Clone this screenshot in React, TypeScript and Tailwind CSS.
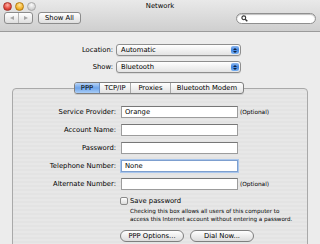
import React from 'react';

const Popup: React.FC<{ value: string }> = ({ value }) => (
  <div className="flex h-[12px] w-[125px] items-stretch rounded-[3px] border border-[#8e8e8e] bg-gradient-to-b from-white to-[#e4e4e4] shadow-[0_1px_0_rgba(0,0,0,0.08)]">
    <span className="flex-1 pl-[4px] leading-[10px]">{value}</span>
    <span className="mr-[1px] my-[1px] flex w-[8px] flex-col items-center justify-center gap-[1px] rounded-[2px] bg-gradient-to-b from-[#8fb9f0] via-[#3f84e0] to-[#79b1f2]">
      <span className="h-0 w-0 border-x-[2px] border-b-[2px] border-x-transparent border-b-[#10213d]" />
      <span className="h-0 w-0 border-x-[2px] border-t-[2px] border-x-transparent border-t-[#10213d]" />
    </span>
  </div>
);

const Field: React.FC<{ label: string; value?: string; optional?: boolean; focus?: boolean }> = ({ label, value, optional, focus }) => (
  <div className="flex h-[12px] items-center">
    <span className="w-[103px] text-right">{label}</span>
    <div
      className={
        focus
          ? 'ml-[5px] h-[12px] w-[117px] border border-[#7d9fcf] bg-white pl-[3px] leading-[10px] shadow-[0_0_0_1px_#a9c6ec]'
          : 'ml-[5px] h-[12px] w-[117px] border border-[#9c9c9c] border-t-[#777] bg-white pl-[3px] leading-[10px]'
      }
    >
      {value}
    </div>
    {optional && <span className="ml-[2px] text-[5.8px]">(Optional)</span>}
  </div>
);

const App: React.FC = () => {
  return (
    <div className="h-[244px] w-[320px] overflow-hidden bg-[#ececec] font-['DejaVu_Sans',sans-serif] text-[6.8px] text-black">
      {/* Unified toolbar */}
      <div className="flex h-[32px] flex-col border-b border-[#9a9a9a] bg-gradient-to-b from-[#e9e9e9] to-[#cfcfcf]">
        <div className="relative flex h-[11px] items-center pl-[3px] pt-[1px]">
          <div className="flex gap-[3px]">
            <span className="h-[9px] w-[9px] rounded-full border border-[#a8342c] bg-[radial-gradient(circle_at_50%_30%,#ffb4a8,#e2463b_60%,#b8281e)]" />
            <span className="h-[9px] w-[9px] rounded-full border border-[#b57b12] bg-[radial-gradient(circle_at_50%_30%,#ffe6a0,#f3b42e_60%,#c98410)]" />
            <span className="h-[9px] w-[9px] rounded-full border border-[#a9a9a9] bg-[radial-gradient(circle_at_50%_30%,#fafafa,#d6d6d6_60%,#bdbdbd)]" />
          </div>
          <span className="absolute inset-x-0 top-[1px] text-center">Network</span>
        </div>
        <div className="mt-[1px] flex items-center pl-[4px] pr-[4px]">
          <div className="flex h-[12px] w-[29px] rounded-[3px] border border-[#8c8c8c] bg-gradient-to-b from-white to-[#dedede]">
            <span className="flex flex-1 items-center justify-center border-r border-[#b4b4b4]">
              <span className="h-0 w-0 border-y-[2.5px] border-r-[4px] border-y-transparent border-r-[#a6a6a6]" />
            </span>
            <span className="flex flex-1 items-center justify-center">
              <span className="h-0 w-0 border-y-[2.5px] border-l-[4px] border-y-transparent border-l-[#a6a6a6]" />
            </span>
          </div>
          <div className="ml-[5px] flex h-[12px] w-[43px] items-center justify-center rounded-[3px] border border-[#8c8c8c] bg-gradient-to-b from-white to-[#dedede]">
            Show All
          </div>
          <div className="ml-auto mt-[1px] flex h-[11px] w-[80px] items-center rounded-full border border-[#8f8f8f] bg-white pl-[4px] shadow-[inset_0_1px_1px_rgba(0,0,0,0.25)]">
            <svg width="7" height="7" viewBox="0 0 7 7">
              <circle cx="2.8" cy="2.8" r="1.9" fill="none" stroke="#333" strokeWidth="1.1" />
              <line x1="4.2" y1="4.2" x2="6.3" y2="6.3" stroke="#333" strokeWidth="1.4" />
            </svg>
          </div>
        </div>
      </div>

      {/* Location / Show */}
      <div className="mt-[12px] flex flex-col gap-[5px]">
        <div className="flex items-center">
          <span className="w-[113px] text-right">Location:</span>
          <span className="ml-[3px]"><Popup value="Automatic" /></span>
        </div>
        <div className="flex items-center">
          <span className="w-[113px] text-right">Show:</span>
          <span className="ml-[3px]"><Popup value="Bluetooth" /></span>
        </div>
      </div>

      {/* Tab view */}
      <div className="mx-[12px] mt-[15px] h-[200px] rounded-[4px] border border-[#a9a9a9] bg-[repeating-linear-gradient(0deg,#e3e3e3_0px,#e3e3e3_2px,#e7e7e7_2px,#e7e7e7_4px)]">
        <div className="-mt-[7px] flex justify-center pr-[2px]">
          <div className="flex h-[12px] overflow-hidden rounded-[3px] border border-[#7f7f7f] bg-gradient-to-b from-white to-[#e2e2e2] shadow-[0_1px_0_rgba(0,0,0,0.1)]">
            <span className="flex w-[25px] items-center justify-center border-r border-[#6c8fc2] bg-gradient-to-b from-[#b8d4f6] via-[#6ea4ea] to-[#a9cdf7]">PPP</span>
            <span className="flex w-[31px] items-center justify-center border-r border-[#a8a8a8]">TCP/IP</span>
            <span className="flex w-[40px] items-center justify-center border-r border-[#a8a8a8]">Proxies</span>
            <span className="flex w-[72px] items-center justify-center">Bluetooth Modem</span>
          </div>
        </div>

        <div className="mt-[12px] flex flex-col gap-[6px]">
          <Field label="Service Provider:" value="Orange" optional />
          <Field label="Account Name:" />
          <Field label="Password:" />
          <Field label="Telephone Number:" value="None" focus />
          <Field label="Alternate Number:" optional />
        </div>

        <div className="ml-[107px] mt-[6px] flex flex-col">
          <div className="flex items-center gap-[2px]">
            <span className="h-[8px] w-[8px] rounded-[2px] border border-[#8a8a8a] bg-gradient-to-b from-white to-[#dcdcdc]" />
            <span>Save password</span>
          </div>
          <p className="ml-[10px] mt-[1px] text-[5.6px] leading-[8px]">
            Checking this box allows all users of this computer to
            <br />
            access this Internet account without entering a password.
          </p>
          <div className="mt-[7px] flex gap-[6px]">
            <span className="flex h-[12px] w-[64px] items-center justify-center rounded-full border border-[#7f7f7f] bg-gradient-to-b from-white to-[#dcdcdc]">PPP Options...</span>
            <span className="flex h-[12px] w-[64px] items-center justify-center rounded-full border border-[#7f7f7f] bg-gradient-to-b from-white to-[#dcdcdc]">Dial Now...</span>
          </div>
        </div>
        <div className="ml-[283px] mt-[2px] h-[11px] w-[11px] rounded-full border border-[#8a8a8a] bg-gradient-to-b from-white to-[#dcdcdc]" />
      </div>
    </div>
  );
};

export default App;
